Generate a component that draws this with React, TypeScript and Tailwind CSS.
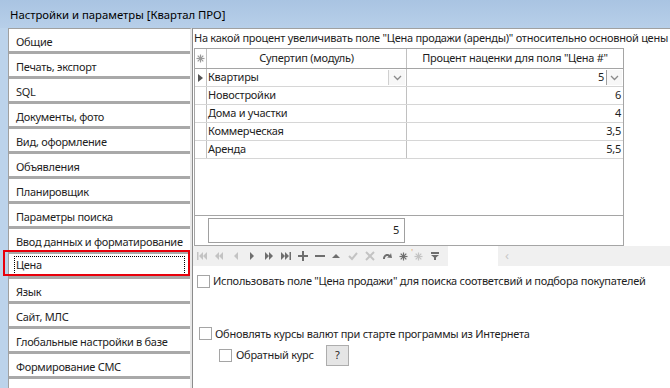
import React from 'react';

const items = [
  'Общие',
  'Печать, экспорт',
  'SQL',
  'Документы, фото',
  'Вид, оформление',
  'Объявления',
  'Планировщик',
  'Параметры поиска',
  'Ввод данных и форматирование',
  'Цена',
  'Язык',
  'Сайт, МЛС',
  'Глобальные настройки в базе',
  'Формирование СМС',
  'Выгрузка (Авито)',
];

const rows = [
  { name: 'Квартиры', val: '5' },
  { name: 'Новостройки', val: '6' },
  { name: 'Дома и участки', val: '4' },
  { name: 'Коммерческая', val: '3,5' },
  { name: 'Аренда', val: '5,5' },
];

const LIGHT = '#c3c3c3';
const DARK = '#6e6e6e';

function Chevron() {
  return (
    <svg width="9" height="6" viewBox="0 0 9 6">
      <path d="M1 1 L4.5 4.5 L8 1" fill="none" stroke="#8a8a8a" strokeWidth="1.3" />
    </svg>
  );
}

function Star({ color }: { color: string }) {
  return (
    <svg width="9" height="9" viewBox="0 0 9 9">
      <g stroke={color} strokeWidth="1.2">
        <line x1="4.5" y1="0.5" x2="4.5" y2="8.5" />
        <line x1="0.5" y1="4.5" x2="8.5" y2="4.5" />
        <line x1="1.7" y1="1.7" x2="7.3" y2="7.3" />
        <line x1="7.3" y1="1.7" x2="1.7" y2="7.3" />
      </g>
    </svg>
  );
}

function NavIcon({ kind }: { kind: string }) {
  const c = ['first', 'prevPage', 'prev', 'check', 'cancel', 'starAdd'].includes(kind) ? LIGHT : DARK;
  let body: React.ReactNode = null;
  switch (kind) {
    case 'first':
      body = (
        <g fill={c}>
          <rect x="0" y="1" width="1.5" height="8" />
          <path d="M6 1 L2 5 L6 9 Z" />
          <path d="M10 1 L6 5 L10 9 Z" />
        </g>
      );
      break;
    case 'prevPage':
      body = (
        <g fill={c}>
          <path d="M5 1 L1 5 L5 9 Z" />
          <path d="M9 1 L5 5 L9 9 Z" />
        </g>
      );
      break;
    case 'prev':
      body = <path d="M7 1 L3 5 L7 9 Z" fill={c} />;
      break;
    case 'next':
      body = <path d="M3 1 L7 5 L3 9 Z" fill={c} />;
      break;
    case 'nextPage':
      body = (
        <g fill={c}>
          <path d="M1 1 L5 5 L1 9 Z" />
          <path d="M5 1 L9 5 L5 9 Z" />
        </g>
      );
      break;
    case 'last':
      body = (
        <g fill={c}>
          <path d="M0 1 L4 5 L0 9 Z" />
          <path d="M4 1 L8 5 L4 9 Z" />
          <rect x="8.5" y="1" width="1.5" height="8" />
        </g>
      );
      break;
    case 'plus':
      body = (
        <g fill={c}>
          <rect x="0" y="4" width="10" height="2" />
          <rect x="4" y="0" width="2" height="10" />
        </g>
      );
      break;
    case 'minus':
      body = <rect x="0" y="4" width="10" height="2" fill={c} />;
      break;
    case 'up':
      body = <path d="M1 7 L5 3 L9 7 Z" fill={c} />;
      break;
    case 'check':
      body = <path d="M1 5 L4 8 L9 2" fill="none" stroke={c} strokeWidth="2" />;
      break;
    case 'cancel':
      body = (
        <g stroke={c} strokeWidth="2">
          <line x1="1" y1="1" x2="9" y2="9" />
          <line x1="9" y1="1" x2="1" y2="9" />
        </g>
      );
      break;
    case 'refresh':
      body = (
        <g fill={c}>
          <path d="M1 8 C1 3 6 2 8 4 L9 2 L10 7 L5 6.5 L6.5 5.5 C5 4.5 3 5 3 8 Z" />
        </g>
      );
      break;
    case 'star':
      return <Star color={c} />;
    case 'starAdd':
      return (
        <span className="relative inline-flex">
          <span className="absolute -left-[3px] -top-[3px] text-[8px] leading-none text-[#e0a060]">'</span>
          <Star color={c} />
        </span>
      );
    case 'filter':
      body = (
        <g fill={c}>
          <rect x="1" y="1" width="8" height="2" />
          <path d="M1 4 L9 4 L6 6.5 L6 9 L4 9 L4 6.5 Z" />
        </g>
      );
      break;
  }
  return (
    <svg width="10" height="10" viewBox="0 0 10 10">
      {body}
    </svg>
  );
}

function Check() {
  return <span className="inline-block w-[13px] h-[13px] border border-[#a5a5a5] bg-white shrink-0" />;
}

export default function App() {
  const navKinds = ['first', 'prevPage', 'prev', 'next', 'nextPage', 'last', 'plus', 'minus', 'up', 'check', 'cancel', 'refresh', 'star', 'starAdd', 'filter'];

  return (
    <div className="w-[670px] h-[388px] overflow-hidden flex flex-col bg-[#bcd3eb] font-['Noto_Sans',sans-serif] text-[11px] text-[#1e1e1e]">
      <div className="h-[28px] shrink-0 flex items-center pl-[10px] pt-[3px] bg-gradient-to-b from-[#a9c4e2] to-[#b7cfe9] text-[11.3px] text-black">
        Настройки и параметры [Квартал ПРО]
      </div>

      <div className="flex flex-1 min-h-0">
        <div className="w-[8px] shrink-0" />

        {/* left list */}
        <div className="w-[184px] shrink-0 bg-[#f2f2f2] border-t border-l border-[#a0a0a0] border-r-2 border-r-[#e8e8e8] flex flex-col tracking-[-0.3px]">
          {items.map((it, i) => (
            <div
              key={it}
              className={`relative h-[25px] shrink-0 bg-white border-b-[3px] border-[#a9a9a9] flex items-center pl-[7px] leading-none whitespace-nowrap ${
                it === 'Цена' ? 'pb-[2px]' : i === items.length - 1 ? 'pt-[12px]' : 'pt-[3px]'
              }`}
            >
              {it === 'Цена' ? (
                <>
                  <div className="absolute left-[5px] right-[5px] top-[2px] bottom-[1px] border border-dotted border-black" />
                  <div className="absolute -left-[6px] right-0 -top-[4px] bottom-0 border-2 border-[#e8000b]" />
                  <span>{it}</span>
                </>
              ) : (
                <span>{it}</span>
              )}
            </div>
          ))}
        </div>

        {/* right panel */}
        <div className="flex-1 min-w-0 bg-white border-t border-[#a0a0a0] border-l border-l-[#8c8c8c] flex flex-col tracking-[-0.26px]">
          <div className="h-[19px] pl-[1px] flex items-center whitespace-nowrap overflow-hidden">
            На какой процент увеличивать поле "Цена продажи (аренды)" относительно основной цены
          </div>

          {/* grid */}
          <div className="ml-[1px] w-[430px] h-[198px] border border-[#a5a5a5] flex flex-col">
            <div className="h-[20px] flex border-b border-[#a5a5a5]">
              <div className="w-[12px] border-r border-[#c0c0c0] flex items-center justify-center">
                <Star color="#9a9a9a" />
              </div>
              <div className="w-[200px] border-r border-[#c0c0c0] flex items-center justify-center">Супертип (модуль)</div>
              <div className="flex-1 flex items-center justify-center">Процент наценки для поля "Цена #"</div>
            </div>
            {rows.map((r, i) => (
              <div key={r.name} className="h-[18px] flex border-b border-[#d6d6d6]">
                <div className="w-[12px] border-r border-[#c0c0c0] flex items-center justify-center">
                  {i === 0 && (
                    <svg width="5" height="8" viewBox="0 0 5 8">
                      <path d="M0 0 L5 4 L0 8 Z" fill="#555" />
                    </svg>
                  )}
                </div>
                <div className="w-[200px] border-r border-[#c0c0c0] flex items-center pl-[1px] relative">
                  {r.name}
                  {i === 0 && (
                    <div className="absolute right-[1px] top-[1px] bottom-[1px] w-[17px] border-l border-[#d0d0d0] bg-[#f7f7f7] flex items-center justify-center">
                      <Chevron />
                    </div>
                  )}
                </div>
                <div className="flex-1 flex items-center justify-end pr-[2px] relative">
                  {i === 0 ? (
                    <>
                      <span className="mr-[17px]">{r.val}</span>
                      <div className="absolute right-[1px] top-[1px] bottom-[1px] w-[16px] border-l border-[#a0a0a0] bg-[#f7f7f7] flex items-center justify-center">
                        <Chevron />
                      </div>
                    </>
                  ) : (
                    r.val
                  )}
                </div>
              </div>
            ))}
            <div className="flex-1" />
            <div className="h-[30px] border-t border-[#a5a5a5] flex items-center pl-[13px]">
              <div className="w-[197px] h-[25px] border border-[#a0a0a0] flex items-center justify-end pr-[5px]">5</div>
            </div>
          </div>

          {/* navigator */}
          <div className="h-[20px] flex">
            <div className="w-[255px] bg-[#f0f0f0] flex items-center pl-[4px] gap-[6.8px]">
              {navKinds.map((k) => (
                <NavIcon key={k} kind={k} />
              ))}
            </div>
            <div className="w-[50px] bg-white" />
            <div className="flex-1 bg-[#f0f0f0] flex items-center pl-[7px] text-[#c8c8c8] text-[13px]">‹</div>
          </div>

          <div className="mt-[7px] flex items-center gap-[3px] pl-[4px] whitespace-nowrap">
            <Check />
            <span>Использовать поле "Цена продажи" для поиска соответсвий и подбора покупателей</span>
          </div>

          <div className="mt-[36px] flex items-center gap-[3px] pl-[6px] whitespace-nowrap">
            <Check />
            <span>Обновлять курсы валют при старте программы из Интернета</span>
          </div>
          <div className="mt-[3px] flex items-center pl-[26px] whitespace-nowrap">
            <Check />
            <span className="ml-[4px]">Обратный курс</span>
            <div className="ml-[12px] w-[23px] h-[21px] border border-[#adadad] bg-[#e5e5e5] flex items-center justify-center text-[11px]">?</div>
          </div>
        </div>
      </div>
    </div>
  );
}
